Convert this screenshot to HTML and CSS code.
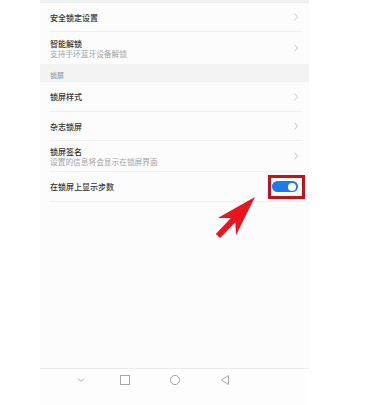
FILE: index.html
```html
<!DOCTYPE html>
<html lang="zh-CN">
<head>
<meta charset="utf-8">
<title>锁屏设置</title>
<link rel="stylesheet" href="styles.css">
</head>
<body>
<div class="screen">
  <div class="topband"></div>
  <div class="row h28 sep">
    <div class="texts"><div class="title">安全锁定设置</div></div>
    <svg class="chev" width="4" height="8" viewBox="0 0 4 8"><path d="M0.5 0.5 L3.5 4 L0.5 7.5" fill="none" stroke="#c8c8c8" stroke-width="1"/></svg>
  </div>
  <div class="row h32">
    <div class="texts"><div class="title">智能解锁</div><div class="sub">支持手环蓝牙设备解锁</div></div>
    <svg class="chev" width="4" height="8" viewBox="0 0 4 8"><path d="M0.5 0.5 L3.5 4 L0.5 7.5" fill="none" stroke="#c8c8c8" stroke-width="1"/></svg>
  </div>
  <div class="section">锁屏</div>
  <div class="row h29 sep">
    <div class="texts"><div class="title">锁屏样式</div></div>
    <svg class="chev" width="4" height="8" viewBox="0 0 4 8"><path d="M0.5 0.5 L3.5 4 L0.5 7.5" fill="none" stroke="#c8c8c8" stroke-width="1"/></svg>
  </div>
  <div class="row h28 sep">
    <div class="texts"><div class="title">杂志锁屏</div></div>
    <svg class="chev" width="4" height="8" viewBox="0 0 4 8"><path d="M0.5 0.5 L3.5 4 L0.5 7.5" fill="none" stroke="#c8c8c8" stroke-width="1"/></svg>
  </div>
  <div class="row h30 sep">
    <div class="texts"><div class="title">锁屏签名</div><div class="sub">设置的信息将会显示在锁屏界面</div></div>
    <svg class="chev" width="4" height="8" viewBox="0 0 4 8"><path d="M0.5 0.5 L3.5 4 L0.5 7.5" fill="none" stroke="#c8c8c8" stroke-width="1"/></svg>
  </div>
  <div class="row h29 sep">
    <div class="texts"><div class="title">在锁屏上显示步数</div></div>
    <div class="toggle"><div class="knob"></div></div>
  </div>
  <div class="spacer"></div>
  <div class="nav">
    <svg class="nav-icon first" width="12" height="10" viewBox="0 0 12 10"><path d="M3 3.5 L6 6.5 L9 3.5" fill="none" stroke="#a8a8a8" stroke-width="1"/></svg>
    <svg class="nav-icon second" width="12" height="10" viewBox="0 0 12 10"><rect x="1.5" y="0.5" width="9" height="9" fill="none" stroke="#a8a8a8" stroke-width="1"/></svg>
    <svg class="nav-icon" width="12" height="10" viewBox="0 0 12 10"><circle cx="6" cy="5" r="4.6" fill="none" stroke="#a8a8a8" stroke-width="1"/></svg>
    <svg class="nav-icon" width="12" height="10" viewBox="0 0 12 10"><path d="M9.5 0.5 L2.5 5 L9.5 9.5 Z" fill="none" stroke="#a8a8a8" stroke-width="1" stroke-linejoin="round"/></svg>
  </div>
</div>
<div class="highlight"></div>
<svg class="arrow" width="391" height="405" viewBox="0 0 391 405">
  <polygon points="255,197 217.8,218 230.9,218 215.8,233.9 220.2,238.1 235.3,222.2 236,235.2" fill="#e8141f"/>
</svg>
</body>
</html>
```

FILE: styles.css
```css
html, body {
  margin: 0;
  padding: 0;
}
body {
  width: 391px;
  height: 405px;
  overflow: hidden;
  background: #ffffff;
  position: relative;
  font-family: "Noto Sans CJK SC", "Noto Sans", sans-serif;
}
.screen {
  margin-left: 40px;
  width: 269px;
  height: 405px;
  background: #fcfcfc;
  display: flex;
  flex-direction: column;
}
.topband {
  height: 2px;
  background: #f1f1f1;
  border-bottom: 1px solid #ececec;
  flex: none;
}
.row {
  flex: none;
  margin-left: 10px;
  margin-right: 6px;
  padding-right: 5px;
  display: flex;
  align-items: center;
  justify-content: space-between;
}
.row.sep {
  border-bottom: 1px solid #efefef;
}
.h28 { height: 28px; }
.h29 { height: 29px; }
.h30 { height: 30px; }
.h32 { height: 32px; }
.texts {
  display: flex;
  flex-direction: column;
}
.title {
  font-size: 8px;
  line-height: 11px;
  font-weight: 500;
  color: #333333;
}
.sub {
  font-size: 7.7px;
  line-height: 10px;
  color: #a3a3a3;
}
.chev {
  display: block;
  flex: none;
}
.section {
  flex: none;
  height: 12px;
  padding-top: 6px;
  padding-left: 10px;
  background: #f3f3f3;
  font-size: 7px;
  line-height: 10px;
  color: #8a8a8a;
}
.toggle {
  width: 26px;
  height: 11px;
  border-radius: 6px;
  background: #1b7be8;
  display: flex;
  align-items: center;
  justify-content: flex-end;
  padding-right: 2px;
  box-sizing: border-box;
  margin-right: 0;
}
.knob {
  width: 8px;
  height: 8px;
  border-radius: 50%;
  background: #ffffff;
}
.spacer {
  flex: 1;
}
.nav {
  flex: none;
  height: 37px;
  border-top: 1px solid #ececec;
  background: #fdfdfd;
  display: flex;
  align-items: flex-start;
  padding-top: 6px;
  padding-left: 35px;
  box-sizing: border-box;
}
.nav-icon {
  display: block;
  flex: none;
  margin-left: 38px;
}
.nav-icon.first {
  margin-left: 0;
}
.nav-icon.second {
  margin-left: 32px;
}
.highlight {
  position: absolute;
  left: 268px;
  top: 175px;
  width: 37px;
  height: 24px;
  box-sizing: border-box;
  border: 3px solid #c0141c;
}
.arrow {
  position: absolute;
  left: 0;
  top: 0;
  pointer-events: none;
}
```
